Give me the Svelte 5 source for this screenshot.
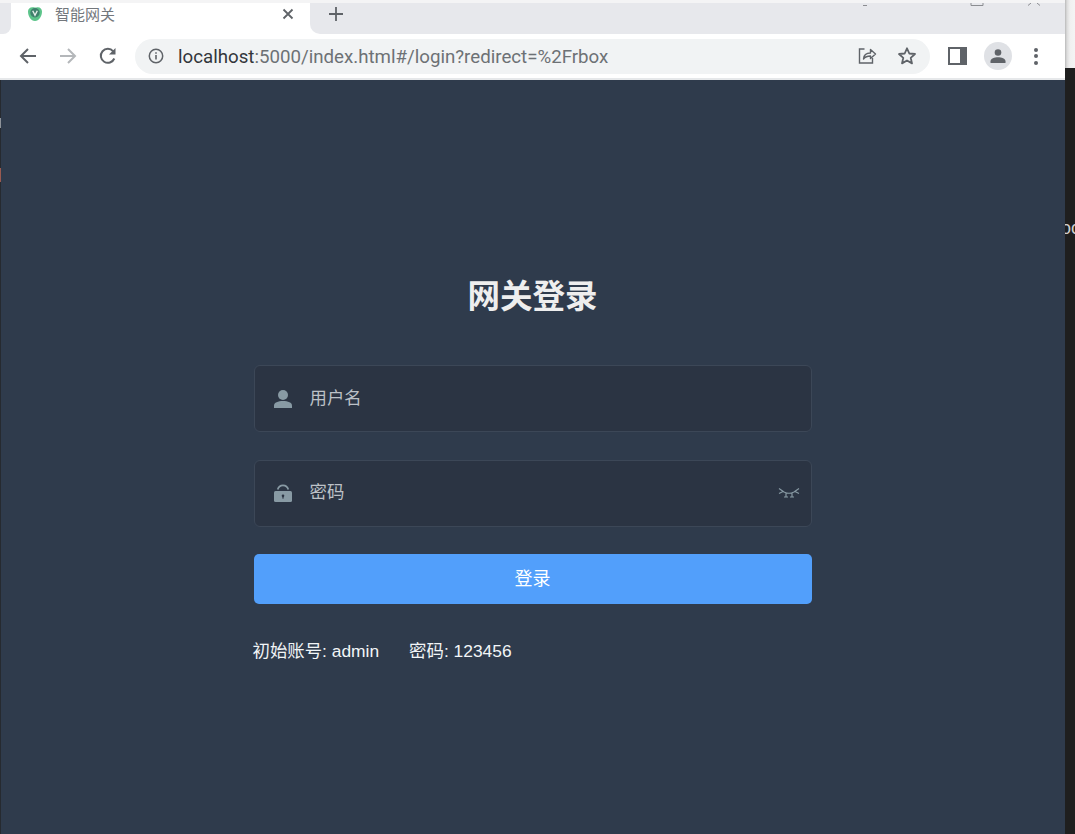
<script>
  let username = $state('');
  let password = $state('');
</script>

<div class="desktop">
  <div class="left-edge"><span class="mark-grey"></span><span class="mark-red"></span></div>
  <div class="browser">
    <div class="top-line"></div>
    <div class="tabstrip">
      <div class="strip-left"></div>
      <div class="tab">
        <svg class="favicon" viewBox="0 0 14 14" width="14" height="14">
          <path d="M0 4.500C0 1.800 2.200 0 5 .3c1.500.2 3 .1 4.500-.1C12 0 14 1.800 14 4.500 14 9 11 14 7 14S0 9 0 4.500z" fill="#5cc48a"/>
          <circle cx="7" cy="5.800" r="4.700" fill="#3f7f6c"/>
          <path d="M4.700 3.800 7 8.300l2.300-4.500" fill="none" stroke="#e3efe9" stroke-width="1.400"/>
        </svg>
        <span class="tab-title">智能网关</span>
        <svg class="close" viewBox="0 0 12 12" width="12" height="12">
          <path d="M1.500 1.500l9 9M10.500 1.500l-9 9" stroke="#5f6368" stroke-width="1.800"/>
        </svg>
      </div>
      <div class="strip-right">
        <svg class="plus" viewBox="0 0 16 16" width="16" height="16">
          <path d="M8 1v14M1 8h14" stroke="#5f6368" stroke-width="1.800"/>
        </svg>
      </div>
      <svg class="window-controls" viewBox="0 0 190 3" width="190" height="3">
        <path d="M0 2.500h4M108 0v2.500h12V0M165 2.500l3-2.500M177 2.500l-3-2.500" fill="none" stroke="#8b8d91" stroke-width="1"/>
      </svg>
    </div>
    <div class="toolbar">
      <svg class="nav" viewBox="0 0 20 20" width="20" height="20">
        <path d="M18 10H3M10 3l-7 7 7 7" fill="none" stroke="#5f6368" stroke-width="2"/>
      </svg>
      <svg class="nav" viewBox="0 0 20 20" width="20" height="20">
        <path d="M2 10h15M10 3l7 7-7 7" fill="none" stroke="#b4b7ba" stroke-width="2"/>
      </svg>
      <svg class="nav" viewBox="0 0 20 20" width="20" height="20">
        <path d="M16.300 12.500A7 7 0 1 1 15.200 5.300" fill="none" stroke="#5f6368" stroke-width="2"/>
        <path d="M17.500 2v6.500H11z" fill="#5f6368"/>
      </svg>
      <div class="omnibox">
        <svg class="info" viewBox="0 0 16 16" width="16" height="16">
          <circle cx="8" cy="8" r="6.700" fill="none" stroke="#5f6368" stroke-width="1.500"/>
          <path d="M8 7v4.500M8 4.300v1.500" stroke="#5f6368" stroke-width="1.600"/>
        </svg>
        <span class="url"><span class="host">localhost</span>:5000/index.html#/login?redirect=%2Frbox</span>
        <svg class="share" viewBox="0 0 20 20" width="20" height="20">
          <path d="M7.500 3H2.500v14h13v-5" fill="none" stroke="#5f6368" stroke-width="1.400"/>
          <path d="M6.500 13c.3-4 3-6 7-6V3.500L18.500 8l-5 4.500V10c-3 0-5.500 1-7 3z" fill="none" stroke="#5f6368" stroke-width="1.400" stroke-linejoin="round"/>
        </svg>
        <svg class="star" viewBox="0 0 20 20" width="20" height="20">
          <path d="M10 2.300l2.300 5.200 5.700.5-4.300 3.800 1.300 5.600L10 14.500l-5 2.900 1.300-5.600L2 8l5.700-.5z" fill="none" stroke="#5f6368" stroke-width="1.800" stroke-linejoin="round"/>
        </svg>
      </div>
      <svg class="sidepanel" viewBox="0 0 19 18" width="19" height="18">
        <rect x="0" y="0" width="19" height="18" fill="#5f6368"/>
        <rect x="2" y="2" width="10" height="14" fill="#fff"/>
      </svg>
      <div class="avatar">
        <svg viewBox="0 0 16 16" width="16" height="16">
          <circle cx="8" cy="4.500" r="3.300" fill="#5f6368"/>
          <path d="M0.500 15v-1.800C.5 10.500 4.500 9.200 8 9.200s7.500 1.300 7.500 4V15z" fill="#5f6368"/>
        </svg>
      </div>
      <div class="dots"><i></i><i></i><i></i></div>
    </div>

    <main class="page">
      <form class="login" onsubmit={(e) => e.preventDefault()}>
        <h1>网关登录</h1>
        <label class="field">
          <svg class="field-icon" viewBox="0 0 18 18" width="18" height="18">
            <ellipse cx="9" cy="5" rx="5" ry="5" fill="#889aa4"/>
            <path d="M0 18v-2.500C0 12.500 4 11 9 11s9 1.500 9 4.500V18z" fill="#889aa4"/>
          </svg>
          <input bind:value={username} placeholder="用户名" />
        </label>
        <label class="field pw">
          <svg class="field-icon" viewBox="0 0 18 18" width="18" height="18">
            <path d="M3.700 5.500C4.500 2.500 6.500 1.300 9 1.300s4.500 1.200 5.300 4.200" fill="none" stroke="#889aa4" stroke-width="1.700"/>
            <rect x="0" y="7" width="18" height="11" rx="1.500" fill="#889aa4"/>
            <circle cx="9" cy="11.800" r="1.300" fill="#2a3342"/>
            <rect x="8.400" y="12" width="1.200" height="2.600" fill="#2a3342"/>
          </svg>
          <input type="password" bind:value={password} placeholder="密码" />
          <svg class="eye" viewBox="0 0 22 12" width="22" height="12">
            <path d="M1 1.500l5 3.500c3 1.500 7 1.500 10 0l5-3.500M1 6.500l4-2M21 6.500l-4-2M8 6v4M14 6v4M6 10h4M12 10h4" fill="none" stroke="#889aa4" stroke-width="1.200"/>
          </svg>
        </label>
        <button type="submit"><span>登录</span></button>
        <p class="tips"><span>初始账号: admin</span><span>密码: 123456</span></p>
      </form>
    </main>
  </div>
  <div class="right-edge"><span class="cut">oc</span></div>
</div>

<style>
  :global(body) {
    margin: 0;
    background: #1f1f1f;
    font-family: "Liberation Sans", "Noto Sans CJK SC", sans-serif;
  }
  .desktop {
    display: flex;
    width: 1075px;
    height: 834px;
    overflow: hidden;
    position: relative;
  }
  .left-edge {
    position: absolute;
    left: 0;
    top: 80px;
    width: 1px;
    height: 754px;
    background: #262a30;
    z-index: 1;
  }
  .mark-grey {
    position: absolute;
    top: 38px;
    height: 10px;
    width: 1px;
    background: #8d9299;
  }
  .mark-red {
    position: absolute;
    top: 88px;
    height: 14px;
    width: 1px;
    background: #9a5a50;
  }
  .browser {
    width: 1065px;
    flex: none;
    display: flex;
    flex-direction: column;
    height: 834px;
  }
  .top-line {
    height: 3px;
    background: #f4f4f5;
    flex: none;
  }
  .tabstrip {
    height: 31px;
    flex: none;
    background: #fff;
    display: flex;
    position: relative;
  }
  .strip-left {
    width: 11px;
    flex: none;
    background: #e7e8ec;
    border-bottom-right-radius: 8px;
  }
  .strip-right {
    flex: 1;
    background: #e7e8ec;
    border-bottom-left-radius: 10px;
    display: flex;
    align-items: center;
    padding: 0 0 10px 18px;
    box-sizing: border-box;
  }
  .window-controls {
    position: absolute;
    left: 863px;
    top: 0;
  }
  .tab {
    width: 299px;
    flex: none;
    background: #fff;
    display: flex;
    align-items: center;
    padding: 0 16px 10px 17px;
    box-sizing: border-box;
  }
  .favicon {
    flex: none;
  }
  .tab-title {
    margin-left: 13px;
    font-size: 15px;
    color: #73777c;
    flex: 1;
  }
  .close {
    flex: none;
  }
  .toolbar {
    height: 44px;
    flex: none;
    background: #fff;
    border-bottom: 2px solid #e6e8ea;
    display: flex;
    align-items: center;
    padding-left: 18px;
    gap: 20px;
  }
  .omnibox {
    width: 795px;
    height: 35px;
    margin-left: -3px;
    background: #f1f3f4;
    border-radius: 18px;
    display: flex;
    align-items: center;
    padding: 0 13px;
    box-sizing: border-box;
  }
  .info {
    flex: none;
  }
  .url {
    margin-left: 14px;
    padding-top: 2px;
    flex: 1;
    font-family: "Roboto", "Liberation Sans", sans-serif;
    font-size: 18.7px;
    color: #6d7175;
    white-space: nowrap;
  }
  .host {
    color: #33363b;
  }
  .share {
    margin-right: 20px;
  }
  .sidepanel {
    margin-left: -2px;
  }
  .avatar {
    width: 28px;
    height: 28px;
    border-radius: 50%;
    background: #dfe1e5;
    display: flex;
    align-items: center;
    justify-content: center;
    margin-left: -3px;
  }
  .dots {
    display: flex;
    flex-direction: column;
    gap: 2.5px;
    margin-left: 2px;
  }
  .dots i {
    width: 4px;
    height: 4px;
    border-radius: 50%;
    background: #5f6368;
  }
  .page {
    flex: 1;
    background: #2f3b4c;
    display: flex;
    justify-content: center;
  }
  .login {
    width: 558px;
    padding-top: 195px;
  }
  h1 {
    margin: 0 0 46px;
    font-size: 32.5px;
    line-height: 44px;
    font-weight: 700;
    color: #eee;
    text-align: center;
  }
  .field {
    height: 67px;
    box-sizing: border-box;
    display: flex;
    align-items: center;
    background: #2b3443;
    border: 1px solid #3c4757;
    border-radius: 6px;
    padding: 0 11px 0 19px;
    margin-bottom: 28px;
  }
  .pw {
    padding-bottom: 2px;
  }
  .field-icon {
    flex: none;
  }
  input {
    flex: 1;
    min-width: 0;
    margin-left: 18px;
    border: 0;
    outline: 0;
    padding: 0;
    background: transparent;
    color: #fff;
    font-family: inherit;
    font-size: 17.4px;
  }
  input::placeholder {
    color: #bcc1c7;
    opacity: 1;
  }
  .eye {
    flex: none;
  }
  button {
    display: block;
    width: 100%;
    height: 50px;
    margin-top: -1px;
    padding: 0 0 5px;
    border: 0;
    border-radius: 5px;
    background: #529ffb;
    color: #fff;
    font-family: inherit;
    font-size: 18px;
  }
  .tips {
    margin: 36px 0 0 -1px;
    font-size: 17.4px;
    line-height: 22px;
    color: #f2f5f7;
    display: flex;
    gap: 30px;
  }
  .right-edge {
    flex: 1;
    background: #1f1f1f;
    position: relative;
    overflow: hidden;
  }
  .right-edge::before {
    content: "";
    position: absolute;
    left: 0;
    right: 0;
    top: 0;
    height: 68px;
    background: linear-gradient(90deg, #b9b9b9 0, #dcdcdc 2px, #f0f0f0 5px, #f4f4f4 100%);
  }
  .cut {
    position: absolute;
    left: -4px;
    top: 218px;
    font-size: 18px;
    color: #cfcfcf;
  }
</style>
